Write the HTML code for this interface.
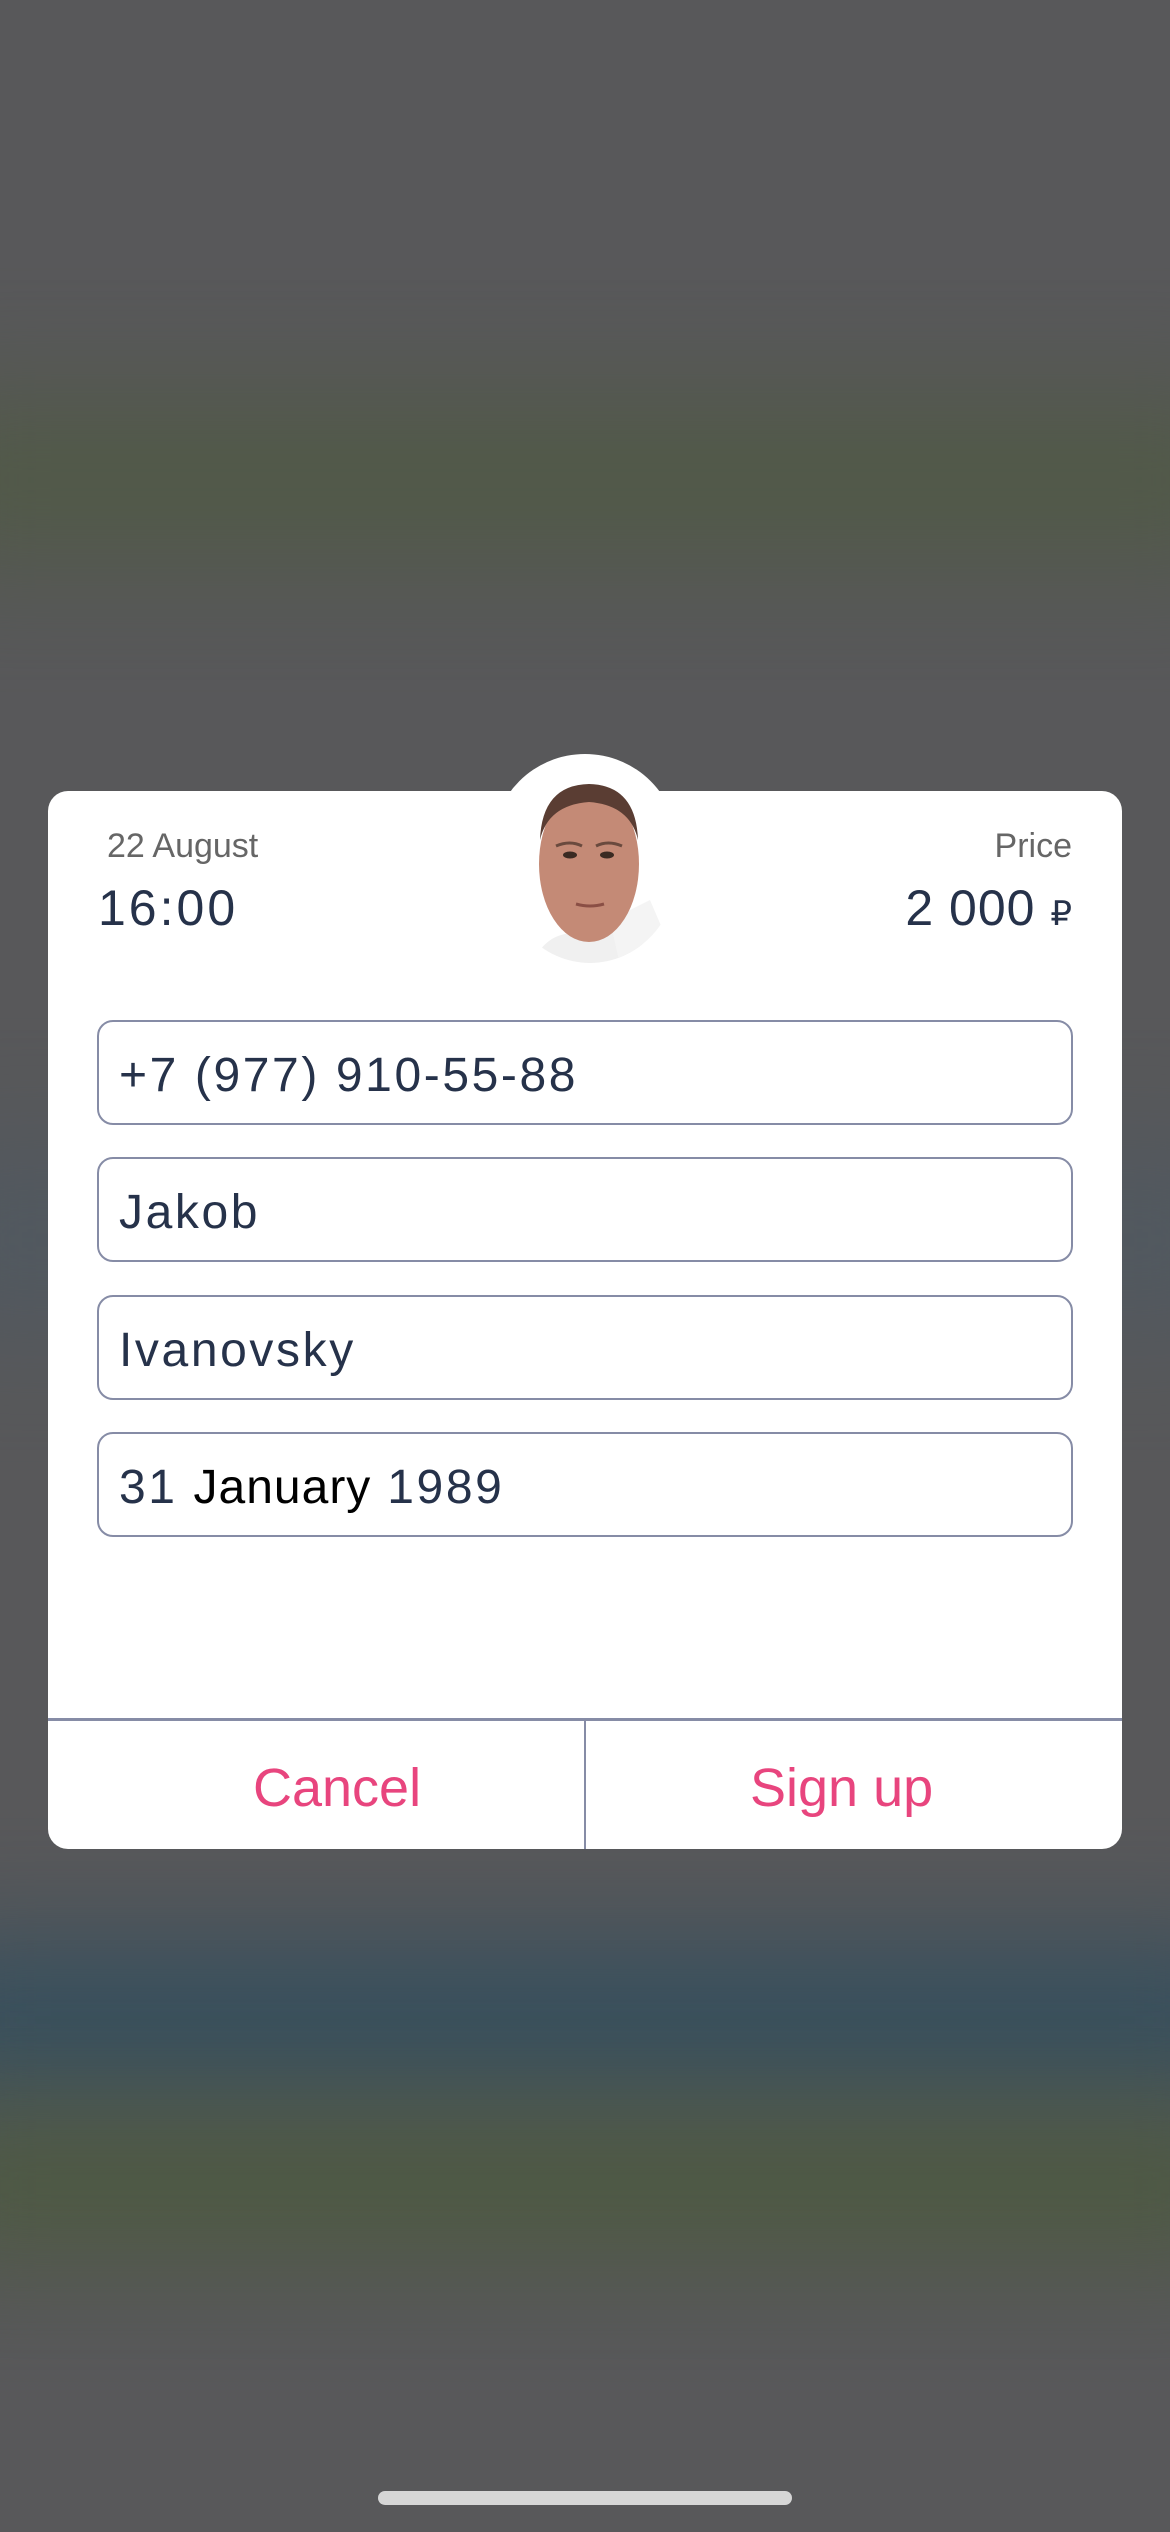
<!DOCTYPE html>
<html><head><meta charset="utf-8"><style>
html,body{margin:0;padding:0;}
body{width:1170px;height:2532px;position:relative;overflow:hidden;background:#58585a;font-family:"Liberation Sans",sans-serif;}
.band{position:absolute;left:-100px;right:-100px;filter:blur(60px);}
.card{position:absolute;left:48px;top:791px;width:1074px;height:1058px;background:#fff;border-radius:20px;}
.bump{position:absolute;left:492px;top:754px;width:186px;height:186px;border-radius:50%;background:#fff;}
.t{position:absolute;white-space:nowrap;}
.inp{position:absolute;left:49px;width:976px;height:105px;border:2.5px solid #868ca6;border-radius:16px;box-sizing:border-box;}
.inp span{position:absolute;left:20px;top:26px;font-size:48px;color:#26324a;letter-spacing:2.6px;}
.btn{position:absolute;top:966px;font-size:54px;color:#e8457e;}
</style></head><body>
<div class="band" style="top:400px;height:160px;background:#4f5a42;opacity:.8"></div>
<div class="band" style="top:1150px;height:180px;background:#4a5a66;opacity:.5"></div>
<div class="band" style="top:1950px;height:140px;background:#2e4d5e;opacity:.9"></div>
<div class="band" style="top:2120px;height:130px;background:#4b5a3c;opacity:.9"></div>
<div class="bump"></div>
<div class="card">
  <div class="t" style="left:59px;top:36px;font-size:34px;color:#666;">22 August</div>
  <div class="t" style="left:50px;top:88px;font-size:50px;color:#26324a;letter-spacing:3px;">16:00</div>
  <div class="t" style="right:50px;top:36px;font-size:34px;color:#666;">Price</div>
  <div class="t" style="right:50px;top:88px;font-size:50px;color:#26324a;letter-spacing:1px;">2 000 <span style="font-size:34px;letter-spacing:0">₽</span></div>
</div>
<svg style="position:absolute;left:490px;top:760px" width="190" height="210" viewBox="0 0 190 210">
  <defs><clipPath id="c"><ellipse cx="100" cy="108" rx="88" ry="95"/></clipPath></defs>
  <g clip-path="url(#c)">
    <path d="M40 210 Q55 165 100 175 Q150 160 170 210Z" fill="#f0f0f0"/>
    <path d="M120 160 L160 140 L175 175 L130 205Z" fill="#f4f4f4"/>
    <ellipse cx="99" cy="104" rx="50" ry="78" fill="#c48a76"/>
    <path d="M50 80 Q52 25 99 24 Q146 25 148 80 Q140 45 99 42 Q58 45 50 80Z" fill="#5a3d33"/>
    <ellipse cx="80" cy="95" rx="7" ry="3.5" fill="#3a2a22"/>
    <ellipse cx="117" cy="95" rx="7" ry="3.5" fill="#3a2a22"/>
    <path d="M66 86 Q80 80 92 86 M106 86 Q118 80 132 86" stroke="#6a4a3e" stroke-width="3" fill="none"/>
    <path d="M86 144 Q100 148 114 144" stroke="#8a4f45" stroke-width="3" fill="none"/>
  </g>
</svg>
<div class="card" style="background:transparent;">
  <div class="inp" style="top:229px"><span>+7 (977) 910-55-88</span></div>
  <div class="inp" style="top:366px"><span>Jakob</span></div>
  <div class="inp" style="top:504px"><span>Ivanovsky</span></div>
  <div class="inp" style="top:641px"><span>31 <span style="position:static;color:#000;letter-spacing:1px">January</span> 1989</span></div>
  <div style="position:absolute;left:0;right:0;top:927px;height:3px;background:#868ca6"></div>
  <div style="position:absolute;left:536px;top:929px;width:2px;bottom:0;background:#868ca6"></div>
  <div class="btn" style="left:205px">Cancel</div>
  <div class="btn" style="left:702px">Sign up</div>
</div>
<div style="position:absolute;left:378px;top:2491px;width:414px;height:14px;border-radius:7px;background:#d6d6d6"></div>
</body></html>
